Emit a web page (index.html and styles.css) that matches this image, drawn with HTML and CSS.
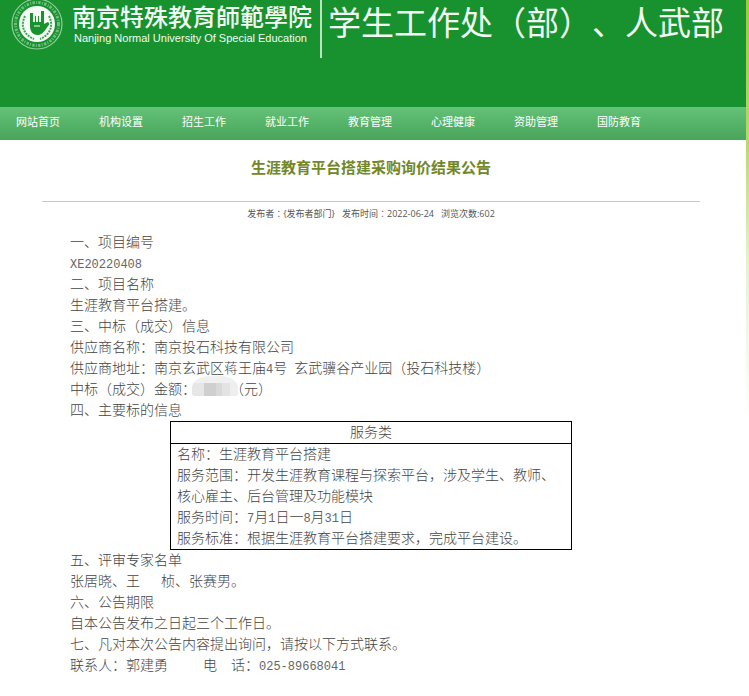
FILE: index.html
```html
<!DOCTYPE html>
<html lang="zh-CN">
<head>
<meta charset="utf-8">
<meta name="viewport" content="width=device-width, initial-scale=1">
<title>生涯教育平台搭建采购询价结果公告</title>
<link rel="stylesheet" href="styles.css">
</head>
<body>
<div class="page">
  <header class="banner">
    <svg class="seal" viewBox="0 0 52 52" aria-hidden="true">
      <circle cx="26" cy="26" r="25" fill="none" stroke="#8fd09b" stroke-width="1.2"/>
      <circle cx="26" cy="26" r="21.500" fill="none" stroke="#a9dcb2" stroke-width="3" stroke-dasharray="2.400 1.400 1 1.200" opacity=".6"/>
      <circle cx="26" cy="26" r="18" fill="#f4fbf5"/>
      <g fill="none" stroke="#3da551" stroke-width="2" stroke-dasharray="2 1">
        <path d="M14 18C9 28 13 37 23 41"/>
        <path d="M38 18C43 28 39 37 29 41"/>
      </g>
      <path d="M19 15h3v9h8V13h3v13l4-2 1.500 2-5 7c-1.500 2-4 4-7 4-5 0-7.500-4-7.500-9z" fill="#18912f"/>
      <path d="M24.500 18v8M27.500 18v8" stroke="#18912f" stroke-width="1"/>
      <path d="M23 28h6" stroke="#f4fbf5" stroke-width="1"/>
    </svg>
    <div class="school">
      <div class="school-cn" lang="zh-TW">南京特殊教育師範學院</div>
      <div class="school-en" lang="en">Nanjing Normal University Of Special Education</div>
    </div>
    <div class="department">学生工作处<span class="centered" lang="zh-TW">（</span>部<span class="centered" lang="zh-TW">）</span>、人武部</div>
  </header>
  <nav class="menu">
    <a href="#">网站首页</a>
    <a href="#">机构设置</a>
    <a href="#">招生工作</a>
    <a href="#">就业工作</a>
    <a href="#">教育管理</a>
    <a href="#">心理健康</a>
    <a href="#">资助管理</a>
    <a href="#">国防教育</a>
  </nav>
  <main class="content">
    <h1>生涯教育平台搭建采购询价结果公告</h1>
    <div class="meta"><span>发布者<span class="centered" lang="zh-TW">：</span>{发布者部门}</span><span>发布时间<span class="centered" lang="zh-TW">：</span>2022-06-24</span><span>浏览次数:602</span></div>
    <article class="article">
      <p>一、项目编号</p>
      <p><span class="num">XE20220408</span></p>
      <p>二、项目名称</p>
      <p>生涯教育平台搭建。</p>
      <p>三、中标（成交）信息</p>
      <p>供应商名称：南京投石科技有限公司</p>
      <p>供应商地址：南京玄武区蒋王庙<span class="num">4</span>号&ensp;玄武骥谷产业园（投石科技楼）</p>
      <p>中标（成交）金额：<span class="redacted"></span>（元）</p>
      <p>四、主要标的信息</p>
      <table class="subject">
        <thead><tr><th scope="col">服务类</th></tr></thead>
        <tbody><tr><td>
          <p>名称：生涯教育平台搭建</p>
          <p>服务范围：开发生涯教育课程与探索平台，涉及学生、教师、核心雇主、后台管理及功能模块</p>
          <p>服务时间：<span class="num">7</span>月<span class="num">1</span>日一<span class="num">8</span>月<span class="num">31</span>日</p>
          <p>服务标准：根据生涯教育平台搭建要求，完成平台建设。</p>
        </td></tr></tbody>
      </table>
      <p>五、评审专家名单</p>
      <p>张居晓、王&emsp;&ensp;桢、张赛男。</p>
      <p>六、公告期限</p>
      <p>自本公告发布之日起三个工作日。</p>
      <p>七、凡对本次公告内容提出询问，请按以下方式联系。</p>
      <p>联系人：郭建勇&emsp;&emsp;&ensp;电&emsp;话：<span class="num">025-89668041</span></p>
    </article>
  </main>
</div>
</body>
</html>
```

FILE: styles.css
```css
* {
  box-sizing: border-box;
}

body {
  margin: 0;
  min-height: 100vh;
  background: linear-gradient(#9acb3f 0, #b4d970 140px, #e4f2cc 260px, #fff 420px) no-repeat;
  font-family: "Open Sans", "Noto Sans CJK SC", sans-serif;
  text-spacing-trim: space-all;
}

.page {
  margin-right: 3px;
  min-height: 100vh;
  background: #fff;
}

.banner {
  display: flex;
  align-items: flex-start;
  height: 107px;
  padding-left: 11px;
  background: #18912f;
  color: #f2fbf3;
  white-space: nowrap;
}

.seal {
  flex: none;
  width: 52px;
  height: 52px;
  margin-top: -2px;
}

.school {
  height: 58px;
  margin-left: 9px;
  padding: 1px 8px 0 0;
  border-right: 2px solid #b9e2c0;
}

.school-cn {
  font-family: "Noto Sans CJK TC", sans-serif;
  font-size: 24px;
  font-weight: 500;
  line-height: 30px;
}

.school-en {
  padding-left: 2px;
  font-family: "Liberation Sans", sans-serif;
  font-size: 11px;
  line-height: 14px;
}

.department {
  margin-left: 6px;
  font-family: "Noto Sans CJK SC", sans-serif;
  font-size: 33px;
  line-height: 42px;
}

.centered {
  font-family: "Noto Sans CJK TC", sans-serif;
}

.menu {
  display: flex;
  height: 33px;
  background: linear-gradient(#64c278, #48a55a);
}

.menu a {
  width: 83px;
  padding-left: 16px;
  font-size: 11px;
  line-height: 30px;
  color: #fff;
  text-decoration: none;
  white-space: nowrap;
}

.content {
  padding: 0 46px 20px 42px;
}

h1 {
  margin: 0;
  padding: 12px 0 19px;
  border-bottom: 1px solid #c3c9c8;
  font-size: 15px;
  line-height: 30px;
  text-align: center;
  color: #728726;
}

.meta {
  display: flex;
  justify-content: center;
  gap: 7px;
  padding-top: 2px;
  font-size: 9px;
  line-height: 20px;
  color: #555;
}

.article {
  padding: 8px 28px 0;
  font-family: "Liberation Serif", "Noto Sans CJK SC", serif;
  font-size: 14px;
  font-weight: 300;
  line-height: 21px;
  color: #444;
}

.article p {
  margin: 0;
}

.num {
  font-family: "Liberation Mono", monospace;
  font-size: 12px;
  line-height: 1;
  color: #666;
}

.redacted {
  position: relative;
  display: inline-block;
  width: 34px;
  height: 12px;
}

.redacted::before {
  content: "";
  position: absolute;
  inset: -6px -8px -2px -4px;
  border-radius: 18px 18px 4px 4px / 12px 12px 2px 2px;
  background:
    linear-gradient(90deg, #e6e6e6 0 12px, #cfcfcf 12px 24px, #d9d9d9 24px 30px, #e3e3e3 30px 38px, #eee 38px) 0 7px no-repeat,
    #f0f0f0;
}

.subject {
  width: 402px;
  max-width: 100%;
  margin: 0 auto;
  border-collapse: collapse;
  color: inherit;
}

.subject th,
.subject td {
  padding: 0 6px;
  border: 1px solid #000;
  font-weight: inherit;
}
```
